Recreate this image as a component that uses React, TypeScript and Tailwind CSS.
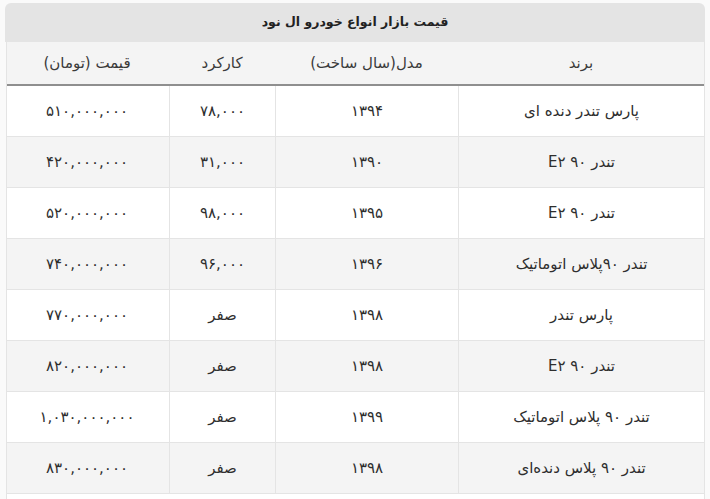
import React from "react";

const rows: [string, string, string, string][] = [
  ["پارس تندر دنده ای", "۱۳۹۴", "۷۸,۰۰۰", "۵۱۰,۰۰۰,۰۰۰"],
  ["تندر ۹۰ E۲", "۱۳۹۰", "۳۱,۰۰۰", "۴۲۰,۰۰۰,۰۰۰"],
  ["تندر ۹۰ E۲", "۱۳۹۵", "۹۸,۰۰۰", "۵۲۰,۰۰۰,۰۰۰"],
  ["تندر ۹۰پلاس اتوماتیک", "۱۳۹۶", "۹۶,۰۰۰", "۷۴۰,۰۰۰,۰۰۰"],
  ["پارس تندر", "۱۳۹۸", "صفر", "۷۷۰,۰۰۰,۰۰۰"],
  ["تندر ۹۰ E۲", "۱۳۹۸", "صفر", "۸۲۰,۰۰۰,۰۰۰"],
  ["تندر ۹۰ پلاس اتوماتیک", "۱۳۹۹", "صفر", "۱,۰۳۰,۰۰۰,۰۰۰"],
  ["تندر ۹۰ پلاس دنده‌ای", "۱۳۹۸", "صفر", "۸۳۰,۰۰۰,۰۰۰"],
];

export default function App() {
  return (
    <div className="w-[710px] h-[499px] overflow-hidden bg-[#fafafa] font-['DejaVu_Sans',sans-serif] text-[#2e2e2e]" dir="rtl">
      <div className="mr-[5px] w-[700px] pt-[3px]">
        <div className="h-[39px] rounded-t-[6px] bg-[#e4e4e4] flex items-center justify-center text-[12.5px] font-bold text-[#222222]">
          قیمت بازار انواع خودرو ال نود
        </div>
        <div className="bg-white border-r border-l border-[#e4e4e4] w-[699px]">
          <div className="grid grid-cols-[246px_183px_106px_164px] h-[44px] bg-[#f4f4f4] border-b-2 border-[#8f8f8f] text-[15px] text-[#3a3a3a]">
            <div className="flex items-center justify-center">برند</div>
            <div className="flex items-center justify-center">مدل(سال ساخت)</div>
            <div className="flex items-center justify-center">کارکرد</div>
            <div className="flex items-center justify-center">قیمت (تومان)</div>
          </div>
          {rows.map((r, i) => (
            <div
              key={i}
              className={`grid grid-cols-[246px_183px_106px_164px] h-[51px] border-b border-[#e4e4e4] text-[15px] ${i % 2 === 1 ? "bg-[#f4f4f4]" : "bg-white"}`}
            >
              <div className="flex items-center justify-center border-l border-[#e4e4e4]">{r[0]}</div>
              <div className="flex items-center justify-center border-l border-[#e4e4e4]">{r[1]}</div>
              <div className="flex items-center justify-center border-l border-[#e4e4e4]">{r[2]}</div>
              <div className="flex items-center justify-center">{r[3]}</div>
            </div>
          ))}
          <div className="h-[51px] bg-white"></div>
        </div>
      </div>
    </div>
  );
}
